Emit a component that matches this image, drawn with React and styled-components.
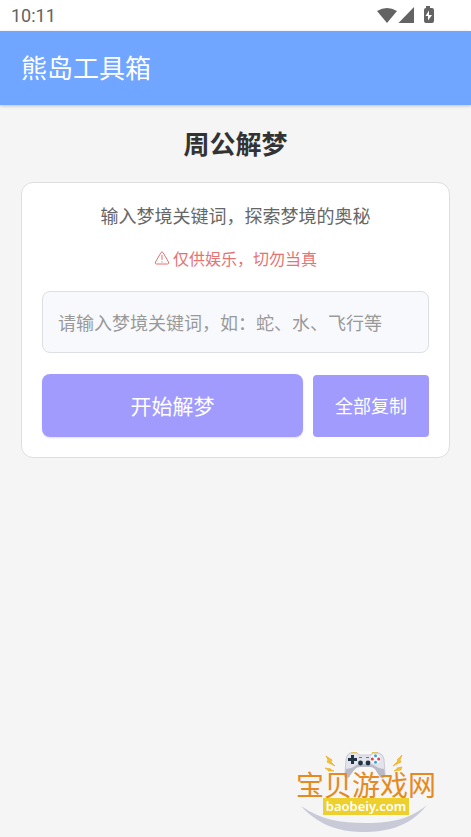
import React, { useState } from "react";
import styled, { createGlobalStyle } from "styled-components";

const GlobalStyle = createGlobalStyle`
  * { box-sizing: border-box; }
  body {
    margin: 0;
    background: #f5f5f5;
    font-family: "Noto Sans CJK SC", "Noto Sans", sans-serif;
  }
`;

const Screen = styled.div`
  position: relative;
  display: flex;
  flex-direction: column;
  min-height: 100vh;
`;

const StatusBar = styled.div`
  display: flex;
  align-items: center;
  justify-content: space-between;
  height: 31px;
  padding: 0 36px 0 11px;
  background: #fff;
  color: #636363;
`;

const Clock = styled.time`
  font: 400 18px/32px Roboto, sans-serif;
`;

const StatusIcons = styled.svg`
  display: block;
  width: 60px;
  height: 20px;
`;

const AppBar = styled.header`
  padding: 17px 21px 19px;
  background: #70a6ff;
  box-shadow: 0 1px 3px rgba(0, 0, 0, 0.22);
  color: #fff;
  font-size: 26px;
  line-height: 38px;
`;

const Main = styled.main`
  display: flex;
  flex-direction: column;
  gap: 21px;
  padding: 19px 21px;
`;

const Title = styled.h1`
  margin: 0;
  color: #333;
  font-size: 26px;
  font-weight: 700;
  line-height: 37px;
  text-align: center;
`;

const Card = styled.form`
  display: flex;
  flex-direction: column;
  gap: 21px;
  padding: 19px 20px 20px;
  border: 1px solid #dedede;
  border-radius: 12px;
  background: #fff;
`;

const Intro = styled.div`
  display: flex;
  flex-direction: column;
  align-items: center;
  gap: 18px;
`;

const Lead = styled.p`
  margin: 0;
  color: #666;
  font-size: 18px;
  line-height: 26px;
`;

const Warning = styled.p`
  display: flex;
  align-items: center;
  gap: 3px;
  margin: 0;
  color: #e57373;
  font-size: 16px;
  line-height: 24px;
`;

const WarningIcon = styled.svg`
  width: 16px;
  height: 16px;
`;

const KeywordInput = styled.input`
  width: 100%;
  height: 62px;
  padding: 0 15px;
  border: 1px solid #dcdfe4;
  border-radius: 8px;
  outline: none;
  background: #f8f9fc;
  color: #333;
  font: inherit;
  font-size: 18px;

  &::placeholder {
    color: #999;
    opacity: 1;
  }
`;

const Actions = styled.div`
  display: flex;
  align-items: flex-end;
  gap: 10px;
`;

const Button = styled.button`
  flex: ${(p) => (p.$primary ? "1" : "0 0 30%")};
  height: ${(p) => (p.$primary ? "63px" : "62px")};
  padding: 0 0 2px;
  border: 0;
  border-radius: ${(p) => (p.$primary ? "8px" : "4px")};
  background: #a29bfe;
  box-shadow: ${(p) => (p.$primary ? "0 1px 2px rgba(108, 100, 200, 0.2)" : "none")};
  color: #fff;
  font-family: inherit;
  font-size: ${(p) => (p.$primary ? "21px" : "18px")};
  cursor: pointer;
`;

const SiteMark = styled.div`
  position: absolute;
  right: 35px;
  bottom: 4px;
  display: flex;
  flex-direction: column;
  align-items: center;
  width: 140px;
  height: 82px;
  padding-top: 19px;
`;

const SiteArt = styled.svg`
  position: absolute;
  inset: 0;
  width: 100%;
  height: 100%;
`;

const SiteName = styled.span`
  position: relative;
  color: #e58a22;
  font-size: 28px;
  font-weight: 400;
  line-height: 28px;
  white-space: nowrap;
`;

const SiteDomain = styled.span`
  position: relative;
  padding: 0 3px;
  background: #edcf2e;
  color: #fff;
  font: 600 13px/17px "Noto Sans", sans-serif;
`;

function SiteLogo() {
  return (
    <SiteMark>
      <SiteArt viewBox="0 0 140 82" aria-hidden="true">
        <circle cx="68" cy="15" r="20" fill="#f8f8f6" />
        <path d="M5 55C25 77 48 81 68 81S113 77 131 54C112 70 91 72 68 72S25 69 5 55Z" fill="#c9cad8" />
        <path d="M55 3V1h6v2M76 3V1h6v2" fill="#edc63d" />
        <path
          d="M54 2h7l3 2h10l3-2h6q4 1 5 6l1 14q0 5-3 5-2 0-3-3l-4-7q-2-2-5-2H64q-3 0-5 2l-5 7q-1 3-3 3-3 0-2-5l1-14q1-5 4-6Z"
          fill="#e3e3eb"
          stroke="#bcbccd"
          strokeWidth=".7"
        />
        <path d="M50 18q5 0 9-3 2-2 5-2h10q3 0 5 2 4 3 9 3l1 6q0 3-3 3-2 0-3-3l-4-6q-2-2-5-2H64q-3 0-5 2l-5 6q-1 3-3 3-3 0-2-5Z" fill="#b9bac8" />
        <path d="M55 4h3v3h3v3h-3v3h-3v-3h-3V7h3Z" fill="#203444" />
        <g fill="#203444">
          <circle cx="64.500" cy="12" r="2.400" />
          <circle cx="72" cy="12" r="2.400" />
        </g>
        <circle cx="79.500" cy="8" r="5" fill="#f7f7fb" />
        <circle cx="79.500" cy="4.800" r="1.500" fill="#38a5cc" />
        <circle cx="79.500" cy="11.200" r="1.500" fill="#38a5cc" />
        <circle cx="76.300" cy="8" r="1.500" fill="#df4058" />
        <circle cx="82.700" cy="8" r="1.500" fill="#df4058" />
        <path d="M63 6h3v1h-3ZM70 6h3v1h-3Z" fill="#df4058" />
        <path
          d="m30 5 6 4-1 2 4 4-8-4 1-2ZM106 4l-5 5 1 1-5 5 8-4-1-2ZM29 17l6 1v1l3 1-6 0v-1ZM106 16l-5 1v1l-3 2 7-1v-1Z"
          fill="#f3c332"
          stroke="#e5a41f"
          strokeWidth=".6"
        />
      </SiteArt>
      <SiteName>宝贝游戏网</SiteName>
      <SiteDomain>baobeiy.com</SiteDomain>
    </SiteMark>
  );
}

export default function App() {
  const [keyword, setKeyword] = useState("");
  return (
    <Screen>
      <GlobalStyle />
      <StatusBar>
        <Clock>10:11</Clock>
        <StatusIcons viewBox="0 0 60 20" fill="#636363" aria-hidden="true">
          <path d="M2 5Q12 -1 22 5L12 17Z" />
          <path d="M39 1v16H23.500Z" />
          <path
            fillRule="evenodd"
            d="M51 0h4v2h2q2 0 2 2v11q0 2-2 2h-6q-2 0-2-2V4q0-2 2-2ZM54 4.500 50.500 10h2.500v4.500L57 9H54Z"
          />
        </StatusIcons>
      </StatusBar>
      <AppBar>熊岛工具箱</AppBar>
      <Main>
        <Title>周公解梦</Title>
        <Card onSubmit={(e) => e.preventDefault()}>
          <Intro>
            <Lead>输入梦境关键词，探索梦境的奥秘</Lead>
            <Warning>
              <WarningIcon viewBox="0 0 16 16" fill="none" stroke="currentColor" aria-hidden="true">
                <path d="M7 2.500Q8 1 9 2.500L14.500 12Q15.200 14 13.500 14H2.500Q.8 14 1.500 12Z" />
                <path d="M8 5v5M8 11.200v1.300" />
              </WarningIcon>
              仅供娱乐，切勿当真
            </Warning>
          </Intro>
          <KeywordInput
            aria-label="梦境关键词"
            placeholder="请输入梦境关键词，如：蛇、水、飞行等"
            value={keyword}
            onChange={(e) => setKeyword(e.target.value)}
          />
          <Actions>
            <Button $primary type="submit">开始解梦</Button>
            <Button type="button">全部复制</Button>
          </Actions>
        </Card>
      </Main>
      <SiteLogo />
    </Screen>
  );
}
